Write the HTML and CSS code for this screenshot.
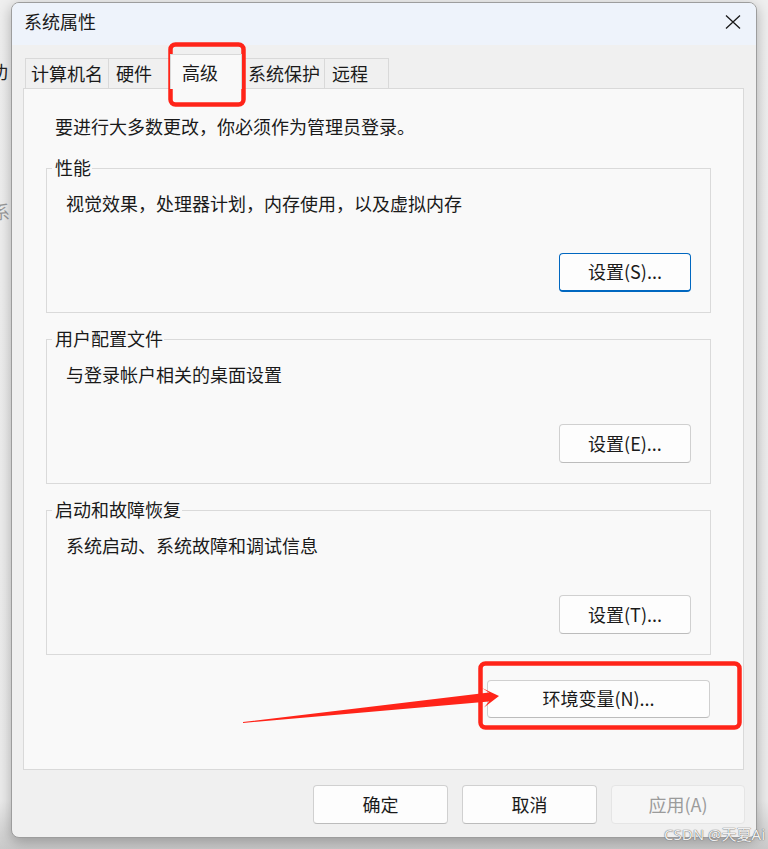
FILE: index.html
```html
<!DOCTYPE html>
<html lang="zh-CN">
<head>
<meta charset="utf-8">
<title>系统属性</title>
<link rel="stylesheet" href="styles.css">
</head>
<body>
<div class="behind">
  <span class="behind-a">功</span>
  <span class="behind-b">系</span>
</div>
<div class="window">
  <div class="titlebar">
    <span class="title">系统属性</span>
    <span class="close">
      <svg width="16" height="16" viewBox="0 0 16 16"><path d="M1 1.5 L15 14.5 M15 1.5 L1 14.5" stroke="#1a1a1a" stroke-width="1.3" fill="none"/></svg>
    </span>
  </div>
  <div class="content">
    <div class="tabs">
      <div class="tab tab-1">计算机名</div>
      <div class="tab tab-2">硬件</div>
      <div class="tab tab-3 selected">高级</div>
      <div class="tab tab-4">系统保护</div>
      <div class="tab tab-5">远程</div>
    </div>
    <div class="panel">
      <p class="intro">要进行大多数更改，你必须作为管理员登录。</p>
      <div class="groups">
        <div class="group">
          <span class="group-title">性能</span>
          <p class="group-text">视觉效果，处理器计划，内存使用，以及虚拟内存</p>
          <div class="group-actions"><button class="btn btn-set focused">设置(S)...</button></div>
        </div>
        <div class="group">
          <span class="group-title">用户配置文件</span>
          <p class="group-text">与登录帐户相关的桌面设置</p>
          <div class="group-actions"><button class="btn btn-set">设置(E)...</button></div>
        </div>
        <div class="group">
          <span class="group-title">启动和故障恢复</span>
          <p class="group-text">系统启动、系统故障和调试信息</p>
          <div class="group-actions"><button class="btn btn-set">设置(T)...</button></div>
        </div>
      </div>
      <div class="env-row"><button class="btn btn-env">环境变量(N)...</button></div>
    </div>
    <div class="footer">
      <button class="btn btn-foot">确定</button>
      <button class="btn btn-foot">取消</button>
      <button class="btn btn-foot disabled">应用(A)</button>
    </div>
  </div>
</div>
<svg class="annot" width="768" height="849" viewBox="0 0 768 849">
  <rect x="170.5" y="44.5" width="73" height="60" rx="5" ry="5" fill="none" stroke="#ff2419" stroke-width="4.5"/>
  <rect x="480.5" y="663.5" width="259" height="64" rx="5" ry="5" fill="none" stroke="#ff2419" stroke-width="4.5"/>
  <polygon points="243,722 489,692.5 482,688 499,696 484,707.5 489,701.5 243,723" fill="#ff2419"/>
</svg>
<div class="watermark">CSDN @天夏Ai</div>
</body>
</html>
```

FILE: styles.css
```css
* { box-sizing: border-box; }

html, body {
  margin: 0;
  padding: 0;
}

body {
  width: 768px;
  height: 849px;
  overflow: hidden;
  position: relative;
  background: linear-gradient(to bottom, #efefef 0, #ececec 800px, #c9c9c9 849px);
  font-family: "Noto Sans CJK SC", "Noto Sans", sans-serif;
  color: #1a1a1a;
  padding-top: 2px;
  padding-left: 11px;
}

.behind {
  position: absolute;
  left: 0;
  top: 0;
  width: 11px;
  height: 849px;
  overflow: hidden;
  font-size: 18px;
}
.behind-a {
  position: absolute;
  top: 58px;
  left: -10px;
  color: #222;
}
.behind-b {
  position: absolute;
  top: 198px;
  left: -8px;
  color: #9a9a9a;
}

.window {
  position: relative;
  width: 746px;
  height: 836px;
  border: 1px solid #9d9d9d;
  border-radius: 8px;
  background: #f0f0f0;
  box-shadow: 0 4px 14px rgba(0, 0, 0, 0.28);
  overflow: hidden;
  display: flex;
  flex-direction: column;
}

.titlebar {
  height: 42px;
  flex: none;
  background: #eef3fb;
  display: flex;
  justify-content: space-between;
  align-items: flex-start;
}

.title {
  font-size: 18px;
  line-height: 24px;
  padding-top: 6px;
  padding-left: 12px;
  color: #1a1a1a;
}

.close {
  display: block;
  width: 16px;
  height: 16px;
  margin-top: 11px;
  margin-right: 15px;
}
.close svg { display: block; }

.content {
  flex: 1;
  padding: 13px 12px 13px 11px;
  display: flex;
  flex-direction: column;
}

.tabs {
  display: flex;
  align-items: flex-end;
  height: 30px;
  margin-left: 2px;
}

.tab {
  height: 30px;
  border: 1px solid #d9d9d9;
  border-bottom: none;
  margin-right: -1px;
  font-size: 18px;
  line-height: 28px;
  background: #f0f0f0;
  white-space: nowrap;
}
.tab-1 { width: 84px; padding-left: 5px; }
.tab-2 { width: 63px; padding-left: 7px; }
.tab-3 { width: 72px; padding-left: 11px; }
.tab-4 { width: 84px; padding-left: 6px; }
.tab-5 { width: 65px; padding-left: 7px; }

.tab.selected {
  position: relative;
  z-index: 2;
  height: 35px;
  margin-bottom: -1px;
  padding-top: 3px;
  background: #f9f9f9;
}

.panel {
  height: 682px;
  border: 1px solid #d9d9d9;
  background: #f9f9f9;
  padding-top: 24px;
}

.intro {
  margin: 0;
  padding-left: 31px;
  font-size: 18px;
  line-height: 26px;
}

.groups {
  margin: 29px 32px 0 22px;
  display: flex;
  flex-direction: column;
  gap: 26px;
}

.group {
  position: relative;
  height: 145px;
  border: 1px solid #dadada;
}

.group-title {
  position: absolute;
  top: -15px;
  left: 5px;
  padding: 0 1px 0 3px;
  font-size: 18px;
  line-height: 26px;
  background: #f9f9f9;
}

.group-text {
  margin: 0;
  padding: 21px 0 0 19px;
  font-size: 18px;
  line-height: 26px;
}

.group-actions {
  display: flex;
  justify-content: flex-end;
  margin-top: 37px;
  padding-right: 19px;
}

.btn {
  font-family: "Noto Sans CJK SC", "Noto Sans", sans-serif;
  font-size: 18px;
  color: #1a1a1a;
  background: #fdfdfd;
  border: 1px solid #d0d0d0;
  border-bottom-color: #bcbcbc;
  border-radius: 4px;
  padding: 0 0 2px 0;
  line-height: 1;
  display: flex;
  align-items: center;
  justify-content: center;
}

.btn-set {
  width: 132px;
  height: 39px;
}

.btn.focused {
  border: 1px solid #0067c0;
  border-bottom: 2px solid #0067c0;
}

.env-row {
  display: flex;
  justify-content: flex-end;
  margin-top: 25px;
  padding-right: 33px;
}

.btn-env {
  width: 223px;
  height: 38px;
}

.footer {
  display: flex;
  justify-content: flex-end;
  gap: 14px;
  margin-top: 15px;
  margin-right: -1px;
}

.btn-foot {
  width: 135px;
  height: 39px;
}
.btn-foot.disabled {
  width: 134px;
  color: #9b9b9b;
  background: #f6f6f6;
  border: 1px solid #e5e5e5;
}

.annot {
  position: absolute;
  left: 0;
  top: 0;
  pointer-events: none;
}

.watermark {
  position: absolute;
  right: 3px;
  bottom: 6px;
  font-family: "Noto Sans", "Noto Sans CJK SC", sans-serif;
  font-size: 15px;
  line-height: 17px;
  color: rgba(255, 255, 255, 0.92);
  text-shadow: 0 0 1px #666, 0 0 1px #666;
}
```
